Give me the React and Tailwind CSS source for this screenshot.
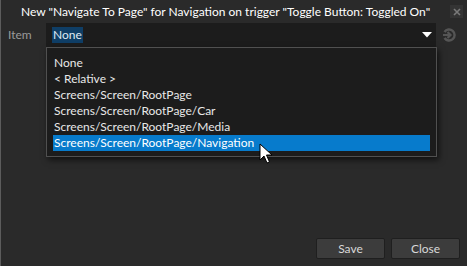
import React from "react";

const items = [
  "None",
  "< Relative >",
  "Screens/Screen/RootPage",
  "Screens/Screen/RootPage/Car",
  "Screens/Screen/RootPage/Media",
  "Screens/Screen/RootPage/Navigation",
];

const Cursor = () => (
  <svg width="16" height="22" viewBox="0 0 16 22" className="absolute left-[258px] top-[143px]">
    <path d="M1 1 L1 17 L5 13 L8 20 L10.5 19 L7.5 12 L13 12 Z" fill="#fff" stroke="#000" strokeWidth="1" />
  </svg>
);

export default function App() {
  return (
    <div
      className="relative w-[467px] h-[266px] bg-[#2a2a2a] border-l border-[#5c5c5c] overflow-hidden text-[12px]"
      style={{ fontFamily: 'Lato, "Noto Sans", sans-serif' }}
    >
      {/* title bar */}
      <div className="h-[23px] flex items-center pl-[20px] pr-[4px]">
        <span className="text-white flex-1 whitespace-nowrap">
          New "Navigate To Page" for Navigation on trigger "Toggle Button: Toggled On"
        </span>
        <div className="w-[13px] h-[13px] bg-[#343434] flex items-center justify-center">
          <svg width="8" height="8" viewBox="0 0 8 8">
            <path d="M1 1 L7 7 M7 1 L1 7" stroke="#7a7a7a" strokeWidth="1.6" />
          </svg>
        </div>
      </div>

      {/* item row */}
      <div className="flex items-center h-[24px]">
        <div className="w-[45px] pl-[7px] text-[#9a9a9a]">Item</div>
        <div className="w-[390px] h-[24px] bg-[#1c1c1c] flex items-center pl-[6px] pr-[3px]">
          <span className="bg-[#0f3e66] text-[#dfe9f2] px-[1px] leading-[16px]">None</span>
          <div className="flex-1" />
          <svg width="10" height="6" viewBox="0 0 10 6" className="mr-[1px]">
            <path d="M0 0 L10 0 L5 5.5 Z" fill="#fff" />
          </svg>
        </div>
        <svg width="16" height="16" viewBox="0 0 16 16" className="ml-[5px]">
          <path d="M3.5 5 A5.5 5.5 0 1 1 3.5 11" stroke="#555" strokeWidth="2.4" fill="none" />
          <path d="M2 8 L9 8 M6.5 5 L9.5 8 L6.5 11" stroke="#555" strokeWidth="2.2" fill="none" />
        </svg>
      </div>

      {/* dropdown list */}
      <div className="absolute left-[45px] top-[47px] w-[391px] h-[110px] bg-[#1c1c1c] border border-[#505050] shadow-[2px_3px_6px_rgba(0,0,0,0.6)] pt-[7px] px-[6px]">
        {items.map((it, i) => (
          <div
            key={it}
            className={`h-[16px] leading-[16px] pl-[1px] whitespace-nowrap ${
              i === items.length - 1 ? "bg-[#077bcc] text-white" : "text-[#e8e8e8]"
            }`}
          >
            {it}
          </div>
        ))}
      </div>

      {/* buttons */}
      <div className="absolute right-[7px] bottom-[7px] flex gap-[6px]">
        <button className="w-[69px] h-[21px] bg-[#3c3c3c] border border-[#1f1f1f] rounded-[2px] text-[#d8d8d8] leading-none">
          Save
        </button>
        <button className="w-[69px] h-[21px] bg-[#3c3c3c] border border-[#1f1f1f] rounded-[2px] text-[#d8d8d8] leading-none">
          Close
        </button>
      </div>

      <Cursor />
    </div>
  );
}
